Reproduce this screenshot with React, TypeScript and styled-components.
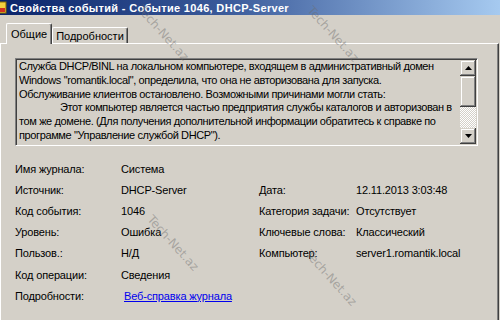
import React from "react";
import styled, { createGlobalStyle } from "styled-components";

const GlobalStyle = createGlobalStyle`
  html, body { margin: 0; padding: 0; background: #d4d0c8; }
  body { font-family: "Liberation Sans", Arial, sans-serif; font-size: 11px; color: #000; }
`;

const Window = styled.div`
  position: relative;
  width: 500px;
  height: 320px;
  overflow: hidden;
  background: #d4d0c8;
  display: flex;
  flex-direction: column;
`;

const TitleBar = styled.div`
  height: 15px;
  flex: none;
  display: flex;
  align-items: center;
  gap: 3px;
  background: linear-gradient(to right, #0a246a 0%, #3a5a9a 45%, #a6caf0 100%);
`;

const TitleText = styled.span`
  color: #fff;
  font-weight: bold;
  font-size: 11px;
  letter-spacing: 0.32px;
  white-space: nowrap;
`;

const TabStrip = styled.div`
  display: flex;
  align-items: flex-end;
  padding-left: 6px;
  margin-top: 8px;
  height: 20px;
  flex: none;
  position: relative;
  z-index: 1;
`;

const Tab = styled.div<{ $active?: boolean }>`
  box-sizing: border-box;
  height: ${(p) => (p.$active ? 21 : 16)}px;
  padding: 0 ${(p) => (p.$active ? 4 : 3)}px;
  display: flex;
  align-items: ${(p) => (p.$active ? "flex-start" : "center")};
  padding-top: ${(p) => (p.$active ? 4 : 0)}px;
  border-top: 1px solid #fff;
  border-left: 1px solid #fff;
  border-right: 1px solid #404040;
  box-shadow: inset -1px 0 #808080;
  border-radius: 2px 2px 0 0;
  background: #d4d0c8;
  white-space: nowrap;
  margin-bottom: ${(p) => (p.$active ? -1 : 0)}px;
`;

const Panel = styled.div`
  flex: 1;
  margin-right: 1px;
  border-top: 1px solid #fff;
  border-left: 1px solid #fff;
  border-right: 1px solid #404040;
  box-shadow: inset -1px 0 #808080;
  padding: 14px 0 0 14px;
`;

const TextBox = styled.div`
  box-sizing: border-box;
  width: 463px;
  height: 88px;
  display: flex;
  border-top: 1px solid #808080;
  border-left: 1px solid #808080;
  border-right: 1px solid #fff;
  border-bottom: 1px solid #fff;
  box-shadow: inset 1px 1px #404040, inset -1px -1px #d4d0c8;
`;

const TextArea = styled.div`
  flex: 1;
  padding: 1px 0 0 3px;
  line-height: 13.8px;
  letter-spacing: -0.38px;
  overflow: hidden;
`;

const Line = styled.div<{ $indent?: boolean }>`
  white-space: pre;
  padding-left: ${(p) => (p.$indent ? 41 : 0)}px;
`;

const ScrollBar = styled.div`
  width: 16px;
  flex: none;
  margin: 1px 1px 1px 0;
  display: flex;
  flex-direction: column;
  background-image: repeating-conic-gradient(#d4d0c8 0 25%, #fff 0 50%);
  background-size: 2px 2px;
`;

const Bevel = styled.div<{ $h: number }>`
  height: ${(p) => p.$h}px;
  flex: none;
  background: #d4d0c8;
  box-shadow: inset -1px -1px #404040, inset 1px 1px #d4d0c8, inset -2px -2px #808080, inset 2px 2px #fff;
  display: flex;
  align-items: center;
  justify-content: center;
`;

const Track = styled.div`
  flex: 1;
`;

const Fields = styled.div`
  display: grid;
  grid-template-columns: 106px 138px 97px 1fr;
  grid-auto-rows: 21.2px;
  align-items: center;
  margin-top: 12px;
  letter-spacing: -0.15px;
`;

const Cell = styled.div`
  white-space: nowrap;
`;

const Link = styled.a`
  color: #0000ee;
  text-decoration: underline;
  margin-left: 3px;
  cursor: pointer;
`;

const Watermark = styled.div`
  position: absolute;
  font-family: "DejaVu Sans", sans-serif;
  font-size: 12px;
  color: rgba(110, 110, 110, 0.45);
  white-space: nowrap;
  transform: translate(-50%, -50%) rotate(48deg);
  pointer-events: none;
`;

const Arrow = ({ up }: { up?: boolean }) => (
  <svg width="7" height="4" viewBox="0 0 7 4">
    <polygon points={up ? "3.5,0 7,4 0,4" : "0,0 7,0 3.5,4"} fill="#000" />
  </svg>
);

const rows: [string, React.ReactNode, string?, string?][] = [
  ["Имя журнала:", "Система"],
  ["Источник:", "DHCP-Server", "Дата:", "12.11.2013 3:03:48"],
  ["Код события:", "1046", "Категория задачи:", "Отсутствует"],
  ["Уровень:", "Ошибка", "Ключевые слова:", "Классический"],
  ["Пользов.:", "Н/Д", "Компьютер:", "server1.romantik.local"],
  ["Код операции:", "Сведения"],
  ["Подробности:", <Link key="l">Веб-справка журнала</Link>],
];

const marks = [
  { x: 163, y: 33 },
  { x: 333, y: 34 },
  { x: 173, y: 243 },
  { x: 331, y: 278 },
];

export default function App() {
  return (
    <>
      <GlobalStyle />
      <Window>
        <TitleBar>
          <svg width="7" height="13" viewBox="0 0 7 13">
            <rect x="-4" y="1" width="10" height="11" fill="#f4d03f" stroke="#8a6d00" strokeWidth="1" />
            <rect x="0" y="7" width="5" height="4" fill="#d03020" />
          </svg>
          <TitleText>Свойства событий - Событие 1046, DHCP-Server</TitleText>
        </TitleBar>
        <TabStrip>
          <Tab $active>Общие</Tab>
          <Tab>Подробности</Tab>
        </TabStrip>
        <Panel>
          <TextBox>
            <TextArea>
              <Line>Служба DHCP/BINL на локальном компьютере, входящем в административный домен</Line>
              <Line>Windows "romantik.local", определила, что она не авторизована для запуска.</Line>
              <Line>Обслуживание клиентов остановлено. Возможными причинами могли стать:</Line>
              <Line $indent>Этот компьютер является частью предприятия службы каталогов и авторизован в</Line>
              <Line>том же домене. (Для получения дополнительной информации обратитесь к справке по</Line>
              <Line>программе "Управление службой DHCP").</Line>
            </TextArea>
            <ScrollBar>
              <Bevel $h={16}><Arrow up /></Bevel>
              <Bevel $h={31} />
              <Track />
              <Bevel $h={16}><Arrow /></Bevel>
            </ScrollBar>
          </TextBox>
          <Fields>
            {rows.map(([l, v, l2, v2], i) => (
              <React.Fragment key={i}>
                <Cell>{l}</Cell>
                <Cell>{v}</Cell>
                <Cell>{l2 ?? ""}</Cell>
                <Cell>{v2 ?? ""}</Cell>
              </React.Fragment>
            ))}
          </Fields>
        </Panel>
        {marks.map((m, i) => (
          <Watermark key={i} style={{ left: m.x, top: m.y }}>Tech-Net.az</Watermark>
        ))}
      </Window>
    </>
  );
}
